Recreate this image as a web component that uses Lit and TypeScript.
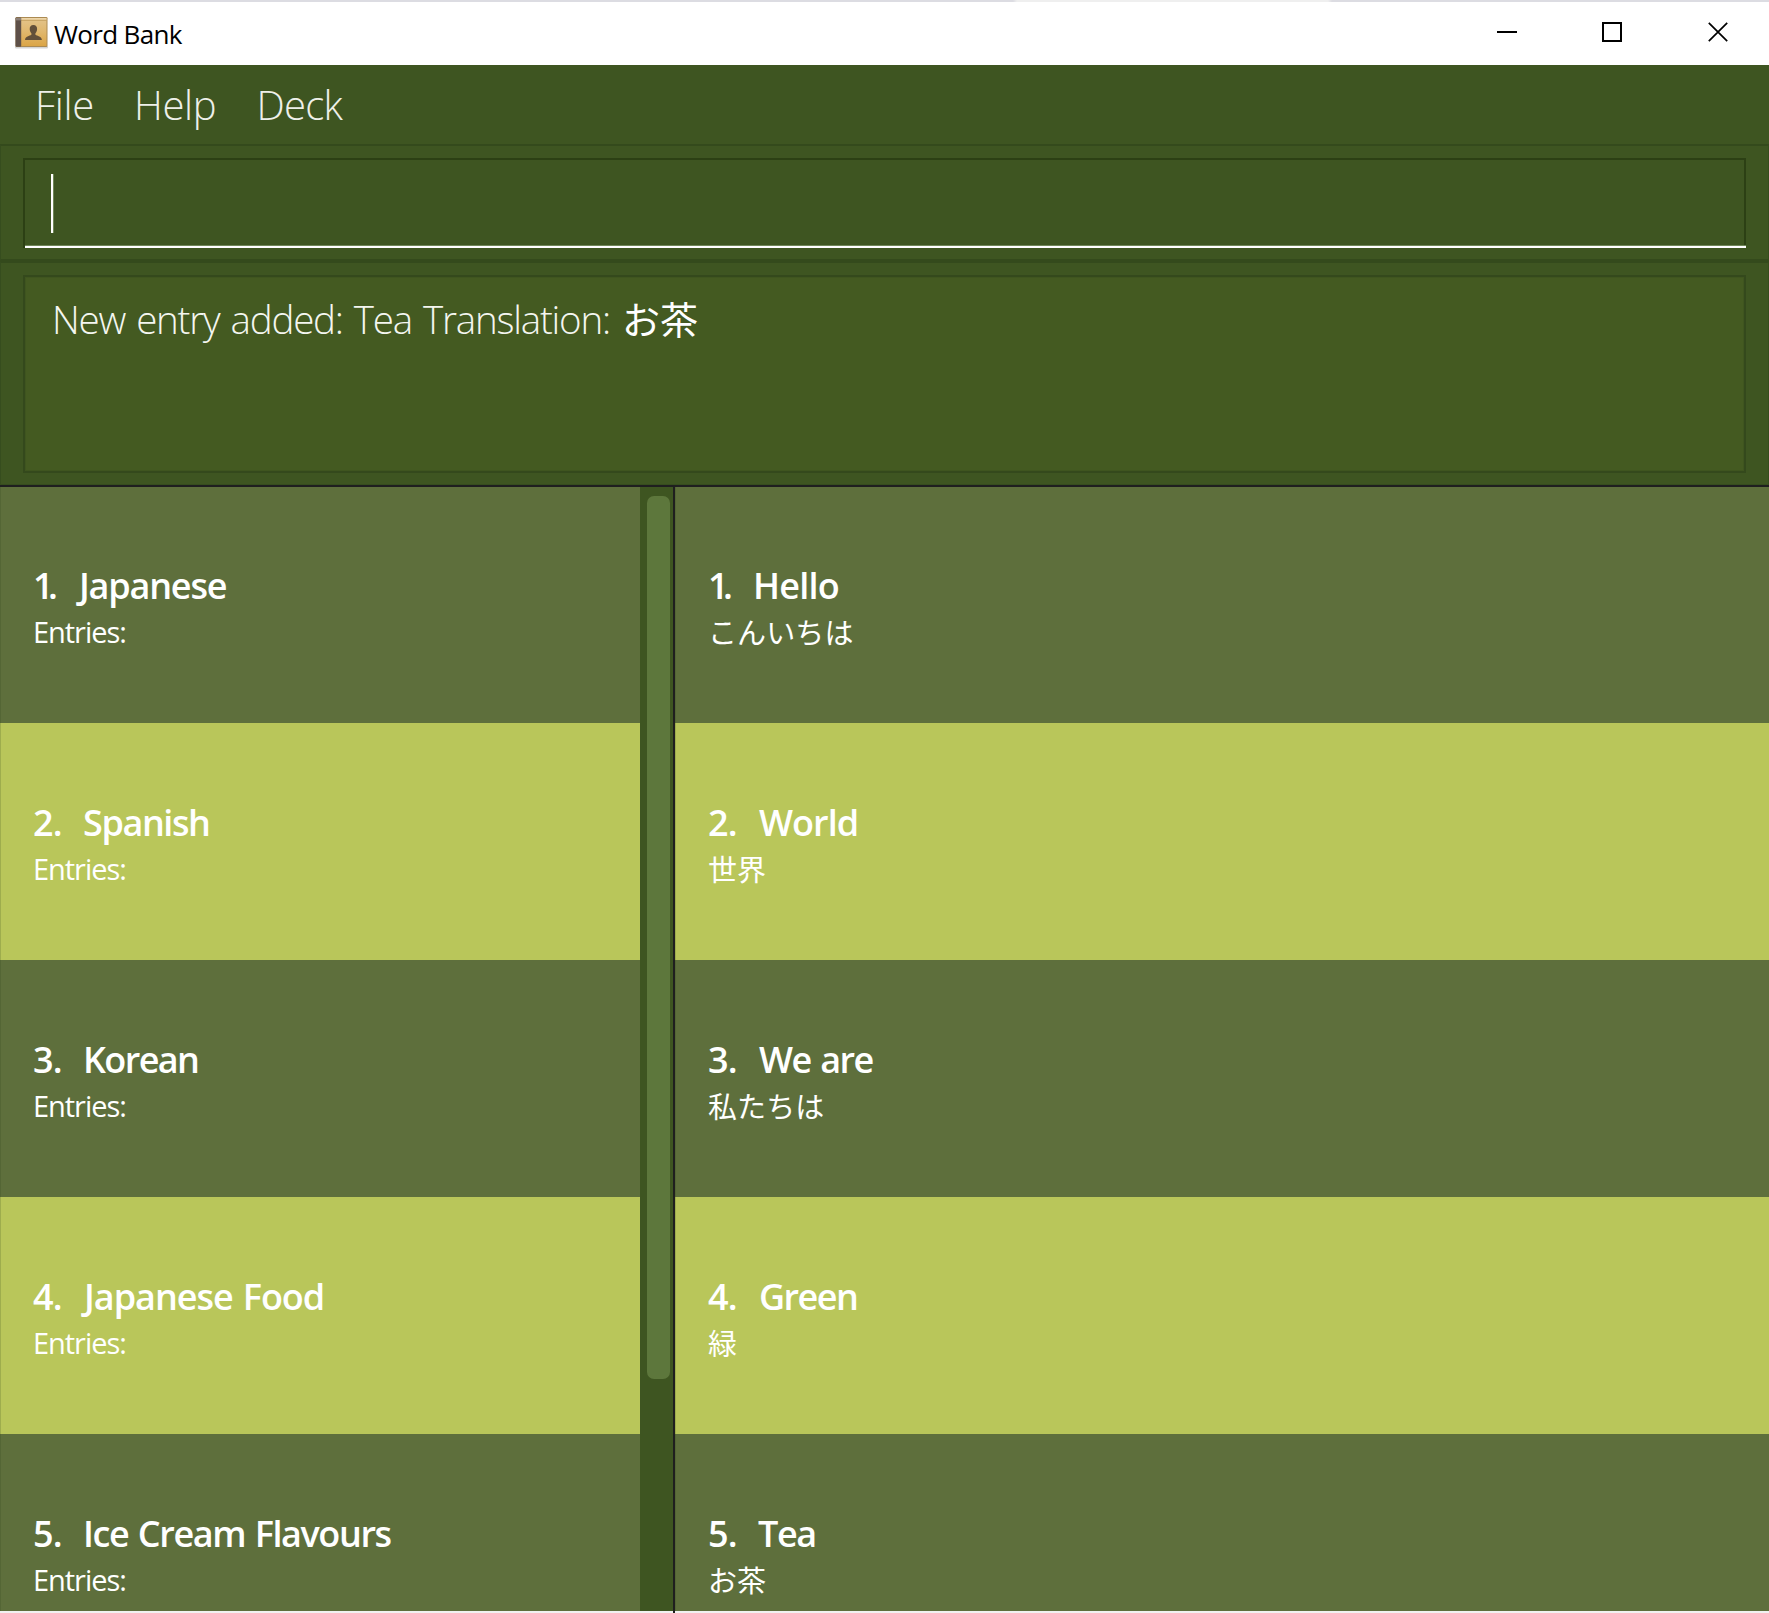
import { LitElement, html, css, svg } from "lit";
import { customElement, property } from "lit/decorators.js";
import { classMap } from "lit/directives/class-map.js";

interface Item {
  name: string;
  detail: string;
  tracking: number;
  shift: number;
}

const DECKS: Item[] = [
  { name: "Japanese", detail: "Entries:", tracking: -1.2, shift: 1 },
  { name: "Spanish", detail: "Entries:", tracking: -1.4, shift: -1 },
  { name: "Korean", detail: "Entries:", tracking: -1.6, shift: -1 },
  { name: "Japanese Food", detail: "Entries:", tracking: -1.0, shift: 0 },
  { name: "Ice Cream Flavours", detail: "Entries:", tracking: -1.4, shift: -1 },
];

const ENTRIES: Item[] = [
  { name: "Hello", detail: "こんいちは", tracking: -0.75, shift: 0 },
  { name: "World", detail: "世界", tracking: -0.95, shift: 0 },
  { name: "We are", detail: "私たちは", tracking: -1.5, shift: 0 },
  { name: "Green", detail: "緑", tracking: -1.55, shift: 0 },
  { name: "Tea", detail: "お茶", tracking: -1.4, shift: -1 },
];

@customElement("card-list")
class CardList extends LitElement {
  @property({ attribute: false }) items: Item[] = [];

  static styles = css`
    :host {
      display: block;
      overflow: hidden;
      height: 1124px;
      color: #fff;
    }
    .list {
      margin-top: -1px;
      display: flex;
      flex-direction: column;
    }
    .row {
      flex: none;
      box-sizing: border-box;
      height: 237px;
      padding: 75px 0 0 33px;
      background: #5e6f3c;
      box-shadow: inset 1px 0 0 rgba(40, 60, 20, 0.18);
    }
    .row.alt {
      background: #b9c65a;
    }
    .title {
      display: flex;
      font: 600 36px/49px "Open Sans", "Noto Sans", sans-serif;
      white-space: pre;
      word-spacing: 1.5px;
    }
    .index {
      flex: none;
      width: 51px;
      letter-spacing: -0.8px;
    }
    .index.first {
      width: 45px;
      letter-spacing: -5.5px;
    }
    .detail {
      margin-top: 3px;
      font: 400 29px/38px "Open Sans", "Noto Sans", sans-serif;
      letter-spacing: -1.05px;
    }
    .detail.ja {
      margin-top: 2px;
      font-family: "Noto Sans CJK JP", sans-serif;
      font-weight: 400;
      letter-spacing: 0.1px;
    }
  `;

  render() {
    return html`<div class="list">
      ${this.items.map((item, i) => html`
        <div class=${classMap({ row: true, alt: i % 2 === 1 })}>
          <div class="title">
            <span class=${classMap({ index: true, first: i === 0 })}>${i + 1}.</span><span
              style="letter-spacing:${item.tracking}px;margin-left:${item.shift}px">${item.name}</span>
          </div>
          <div class=${classMap({ detail: true, ja: item.detail !== "Entries:" })}>${item.detail}</div>
        </div>`)}
    </div>`;
  }
}

const bookIcon = svg`
  <defs>
    <linearGradient id="cover" x1="0" y1="0" x2="0" y2="1">
      <stop offset="0" stop-color="#e3c48c"></stop>
      <stop offset="0.5" stop-color="#e0b76d"></stop>
      <stop offset="1" stop-color="#dba546"></stop>
    </linearGradient>
  </defs>
  <rect x="0" y="29" width="33" height="2.4" rx="1" fill="#d4d4d4"></rect>
  <rect x="0.5" y="0" width="32" height="30" rx="1.2" fill="#ab8a52"></rect>
  <rect x="6" y="1" width="25.5" height="28" fill="url(#cover)"></rect>
  <rect x="6" y="1.4" width="25.5" height="1" fill="#f3e2bd"></rect>
  <rect x="6" y="2.9" width="25.5" height="0.8" fill="#c19c5a"></rect>
  <rect x="0.5" y="0.4" width="5.7" height="29.4" rx="1" fill="#5e5049"></rect>
  <rect x="0.8" y="1" width="5.2" height="2.4" fill="#8c8078"></rect>
  <path d="M18.4 8c2.5 0 3.9 1.7 3.7 4.2-.1 1.8-.8 3.1-1.7 4v1.600c1.800 1.200 6.300 1.600 6.500 5.200H10c.2-3.600 4.600-4 6.400-5.200v-1.600c-.9-.9-1.600-2.200-1.700-4C14.500 9.700 15.900 8 18.400 8z" fill="#63503a"></path>`;

@customElement("app-root")
class AppRoot extends LitElement {
  static styles = css`
    :host {
      display: block;
      width: 1769px;
      height: 1613px;
      overflow: hidden;
      background: #f1f1f1;
      font-family: "Open Sans", "Noto Sans", sans-serif;
    }
    .edge {
      height: 2px;
      background: linear-gradient(90deg, #dcdce2 1013px, #efefef 1017px 1328px, #dcdce2 1332px);
    }
    .titlebar {
      height: 63px;
      background: #fff;
      display: flex;
      align-items: center;
      justify-content: space-between;
      box-sizing: border-box;
      padding: 0 41px 0 15px;
    }
    .brand {
      display: flex;
      align-items: center;
      font-size: 26px;
      line-height: 36px;
      letter-spacing: -0.68px;
      color: #000;
    }
    .brand svg {
      width: 33px;
      height: 32px;
      margin: 0 6px 2px 0;
    }
    .controls {
      display: flex;
      gap: 85px;
      margin-bottom: 3px;
    }
    .controls svg {
      width: 20px;
      height: 20px;
      display: block;
    }
    .controls svg:last-child {
      margin-left: 1px;
    }
    .menu {
      box-sizing: border-box;
      height: 79px;
      display: flex;
      align-items: center;
      gap: 40px;
      padding: 1px 0 0 35px;
      background: #3e5521;
      color: #eef0ea;
      font-size: 40px;
      font-weight: 300;
      line-height: 54px;
      letter-spacing: -0.3px;
    }
    .menu span:last-child {
      letter-spacing: -0.7px;
    }
    .pane {
      box-sizing: border-box;
      background: #3e5521;
      border: 1px solid #364d1e;
      border-top: 2px solid #344a1c;
      padding: 12px 22px 0;
    }
    .command {
      height: 117px;
      border-bottom: 2px solid #344a1c;
    }
    .input {
      box-sizing: border-box;
      height: 90px;
      border: 2px solid #2c4014;
      border-bottom: 0;
      display: flex;
      flex-direction: column;
      justify-content: space-between;
      padding-top: 14px;
    }
    .caret {
      width: 2px;
      height: 59px;
      margin-left: 26px;
      background: #fff;
      border-right: 1px solid #6f8658;
      box-sizing: content-box;
    }
    .underline {
      height: 2px;
      margin-right: -2px;
      border-top: 1px solid #6f8658;
      background: #fff;
    }
    .result {
      height: 224px;
    }
    .display {
      box-sizing: border-box;
      height: 198px;
      border: 2px solid #34491c;
      box-shadow: inset 0 0 0 1px #3f551f;
      background: #445a21;
      padding: 16px 0 0 27px;
      color: #f4f6f0;
      font-size: 38.5px;
      font-weight: 300;
      line-height: 52px;
      letter-spacing: -1.2px;
      word-spacing: 2.2px;
      white-space: pre;
    }
    .display .ja {
      font-family: "Noto Sans CJK JP", sans-serif;
      font-weight: 400;
      font-size: 38px;
      line-height: 1;
      letter-spacing: 0;
      margin-left: 1px;
      color: #fff;
    }
    .content {
      display: grid;
      grid-template-columns: 640px 33px 2px 1fr;
      border-top: 2px solid #1f1f1f;
      background: #3e5521;
      height: 1124px;
    }
    .track {
      padding: 9px 3px 0 6.5px;
    }
    .thumb {
      height: 883px;
      border-radius: 7px;
      background: #5d773c;
    }
    .divider {
      height: 1126px;
      background: #1f1f1f;
    }
  `;

  render() {
    return html`
      <div class="edge"></div>
      <header class="titlebar">
        <div class="brand"><svg viewBox="0 0 33 32">${bookIcon}</svg>Word Bank</div>
        <div class="controls">
          <svg viewBox="0 0 20 20"><path d="M0 10h20" stroke="#000" stroke-width="2"></path></svg>
          <svg viewBox="0 0 20 20"><rect x="1" y="1" width="18" height="18" fill="none" stroke="#000" stroke-width="2"></rect></svg>
          <svg viewBox="0 0 20 20"><path d="M0.8 0.8L19.2 19.2M19.2 0.8L0.8 19.2" stroke="#000" stroke-width="1.7"></path></svg>
        </div>
      </header>
      <nav class="menu"><span>File</span><span>Help</span><span>Deck</span></nav>
      <section class="pane command">
        <div class="input"><div class="caret"></div><div class="underline"></div></div>
      </section>
      <section class="pane result">
        <div class="display">New entry added: Tea Translation: <span class="ja">お茶</span></div>
      </section>
      <main class="content">
        <card-list .items=${DECKS}></card-list>
        <div class="track"><div class="thumb"></div></div>
        <div class="divider"></div>
        <card-list .items=${ENTRIES}></card-list>
      </main>`;
  }
}
